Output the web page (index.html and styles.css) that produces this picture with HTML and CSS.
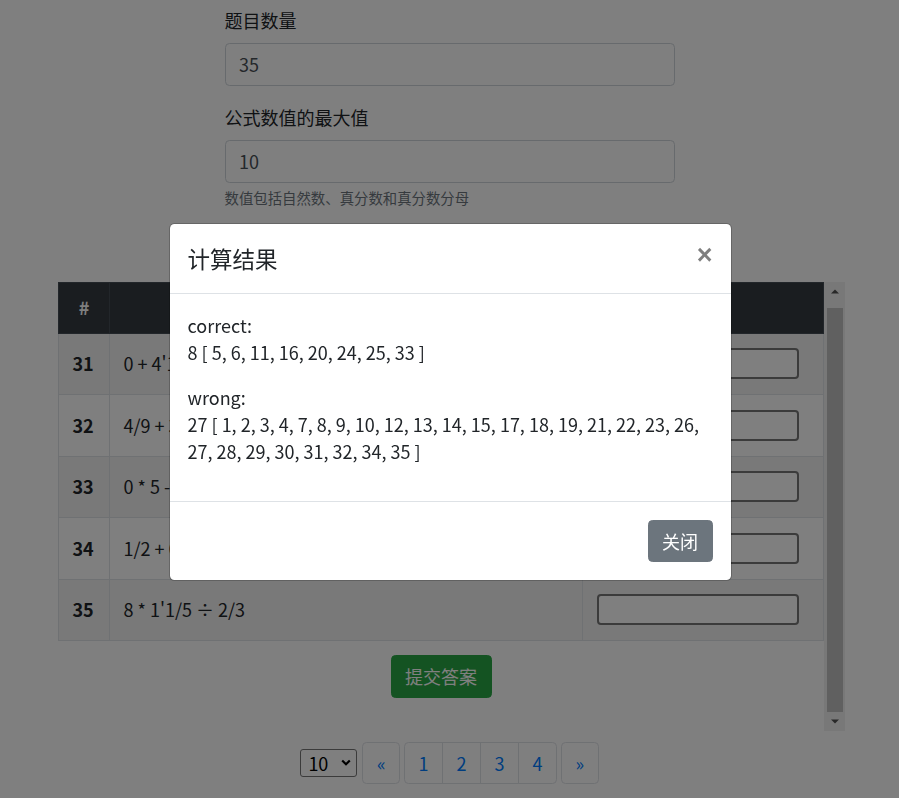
FILE: index.html
```html
<!DOCTYPE html>
<html lang="zh-CN">
<head>
<meta charset="utf-8">
<title>四则运算</title>
<link rel="stylesheet" href="styles.css">
</head>
<body>
<div class="page">
  <form class="setup">
    <div class="group">
      <label class="lbl">题目数量</label>
      <input class="field" type="text" value="35">
    </div>
    <div class="group">
      <label class="lbl">公式数值的最大值</label>
      <input class="field" type="text" value="10">
      <small class="hint">数值包括自然数、真分数和真分数分母</small>
    </div>
  </form>

  <div class="scroll-area">
    <div class="scroll-content">
      <table class="qtable">
        <colgroup>
          <col class="c-num">
          <col>
          <col class="c-ans">
        </colgroup>
        <thead>
          <tr><th>#</th><th>题目</th><th>答案</th></tr>
        </thead>
        <tbody>
          <tr><th>31</th><td>0 + 4'1/3 - 2/7</td><td><input class="ans" type="text"></td></tr>
          <tr><th>32</th><td>4/9 + 3 * 1/2</td><td><input class="ans" type="text"></td></tr>
          <tr><th>33</th><td>0 * 5 - 1/4</td><td><input class="ans" type="text"></td></tr>
          <tr><th>34</th><td>1/2 + 6 ÷ 3</td><td><input class="ans" type="text"></td></tr>
          <tr><th>35</th><td>8 * 1'1/5 ÷ 2/3</td><td><input class="ans" type="text"></td></tr>
        </tbody>
      </table>
      <div class="submit-row"><button type="button" class="btn btn-success">提交答案</button></div>
    </div>
    <div class="vbar">
      <div class="vbar-btn">
        <svg width="8" height="5" viewBox="0 0 8 5"><polygon points="4,0.5 8,4.5 0,4.5" fill="#505050"/></svg>
      </div>
      <div class="vbar-track"><div class="vbar-thumb"></div></div>
      <div class="vbar-btn">
        <svg width="8" height="5" viewBox="0 0 8 5"><polygon points="0,0.5 8,0.5 4,4.5" fill="#505050"/></svg>
      </div>
    </div>
  </div>

  <nav class="pager">
    <div class="select-wrap">
      <select class="size-select"><option>10</option><option>20</option></select>
      <svg class="chev" width="10" height="7" viewBox="0 0 10 7"><polyline points="1.2,1.5 5,5.2 8.8,1.5" fill="none" stroke="#000" stroke-width="2.2"/></svg>
    </div>
    <ul class="pagination"><li><a class="page-link" href="#">«</a></li></ul>
    <ul class="pagination">
      <li><a class="page-link" href="#">1</a></li>
      <li><a class="page-link" href="#">2</a></li>
      <li><a class="page-link" href="#">3</a></li>
      <li><a class="page-link" href="#">4</a></li>
    </ul>
    <ul class="pagination"><li><a class="page-link" href="#">»</a></li></ul>
  </nav>
</div>

<div class="backdrop"></div>
<div class="modal">
  <div class="dialog">
    <div class="m-header">
      <h5 class="m-title">计算结果</h5>
      <button type="button" class="close">×</button>
    </div>
    <div class="m-body">
      <p>correct:<br>8 [ 5, 6, 11, 16, 20, 24, 25, 33 ]</p>
      <p>wrong:<br>27 [ 1, 2, 3, 4, 7, 8, 9, 10, 12, 13, 14, 15, 17, 18, 19, 21, 22, 23, 26, 27, 28, 29, 30, 31, 32, 34, 35 ]</p>
    </div>
    <div class="m-footer">
      <button type="button" class="btn btn-secondary">关闭</button>
    </div>
  </div>
</div>
</body>
</html>
```
FILE: styles.css
```css
html, body {
  margin: 0;
  padding: 0;
}
body {
  font-family: "Noto Sans CJK SC", sans-serif;
  font-size: 18px;
  line-height: 27px;
  color: #212529;
  background: #fff;
}

/* form */
.setup {
  width: 450px;
  margin: 0 auto;
  padding-top: 7px;
}
.group {
  margin-bottom: 18px;
}
.lbl {
  display: block;
  margin-bottom: 9px;
}
.field {
  display: block;
  width: 100%;
  height: 42.75px;
  box-sizing: border-box;
  padding: 6.75px 13.5px;
  font-family: inherit;
  font-size: 18px;
  line-height: 27px;
  color: #495057;
  background: #fff;
  border: 1px solid #ced4da;
  border-radius: 4.5px;
}
.hint {
  display: block;
  margin-top: 4.5px;
  font-size: 14.4px;
  line-height: 21.6px;
  color: #6c757d;
}

/* buttons */
.btn {
  font-family: inherit;
  font-size: 18px;
  line-height: 27px;
  padding: 6.75px 13.5px;
  border: 1px solid transparent;
  border-radius: 4.5px;
  color: #fff;
  cursor: pointer;
}
.btn-success { background: #28a745; border-color: #28a745; }
.btn-secondary { background: #6c757d; border-color: #6c757d; }

/* scroll area with its bar */
.scroll-area {
  display: flex;
  height: 449px;
  margin: 73px 54px 0 58px;
}
.scroll-content {
  flex: 1;
  min-width: 0;
  overflow: hidden;
}
.vbar {
  width: 21px;
  flex: none;
  display: flex;
  flex-direction: column;
  background: #f1f1f1;
}
.vbar-btn {
  height: 19px;
  flex: none;
  display: flex;
  align-items: center;
  justify-content: center;
}
.vbar-btn svg {
  display: block;
  margin-left: 1px;
}
.vbar-track {
  flex: 1;
  display: flex;
  flex-direction: column;
  padding: 7px 2px 0 3px;
}
.vbar-thumb {
  flex: 1;
  background: #c1c1c1;
}

/* table */
.qtable {
  width: 100%;
  border-collapse: collapse;
  margin-bottom: 14px;
}
.c-num { width: 51px; }
.c-ans { width: 241px; }
.qtable th,
.qtable td {
  border: 1px solid #dee2e6;
  padding: 0 13.5px;
  vertical-align: middle;
  text-align: left;
}
.qtable thead th {
  height: 50px;
  background: #343a40;
  border-color: #454d55;
  color: #fff;
  font-weight: 700;
  text-align: center;
}
.qtable tbody tr {
  height: 61.5px;
}
.qtable tbody th {
  font-weight: 700;
}
.qtable tbody tr:nth-child(odd) {
  background: rgba(0, 0, 0, 0.05);
}
.ans {
  display: block;
  width: 202px;
  height: 31px;
  box-sizing: border-box;
  border: 2px solid #767676;
  border-radius: 4px;
  background: #fff;
  font-family: inherit;
  font-size: 16px;
}
.submit-row {
  text-align: center;
}

/* pager */
.pager {
  display: flex;
  justify-content: center;
  align-items: center;
  gap: 4px;
  margin-top: 11px;
}
.select-wrap {
  display: flex;
  align-items: center;
  width: 57px;
  height: 28px;
  box-sizing: border-box;
  padding: 0 5px 0 7px;
  margin-right: 1px;
  background: #fff;
  border: 1px solid #767676;
  border-radius: 3px;
}
.size-select {
  flex: 1;
  min-width: 0;
  appearance: none;
  -webkit-appearance: none;
  border: 0;
  padding: 0;
  background: transparent;
  font-family: inherit;
  font-size: 18px;
  line-height: 24px;
  color: #000;
  outline: none;
}
.chev {
  display: block;
  flex: none;
}
.pagination {
  display: flex;
  list-style: none;
  margin: 0;
  padding: 0;
}
.page-link {
  display: block;
  padding: 9px 13.5px;
  margin-left: -1px;
  font-size: 18px;
  line-height: 22.5px;
  color: #007bff;
  text-decoration: none;
  background: #fff;
  border: 1px solid #dee2e6;
}
.pagination li:first-child .page-link {
  margin-left: 0;
  border-top-left-radius: 4.5px;
  border-bottom-left-radius: 4.5px;
}
.pagination li:last-child .page-link {
  border-top-right-radius: 4.5px;
  border-bottom-right-radius: 4.5px;
}

/* modal */
.backdrop {
  position: fixed;
  inset: 0;
  background: rgba(0, 0, 0, 0.5);
}
.modal {
  position: fixed;
  inset: 0;
  display: flex;
  justify-content: center;
  align-items: flex-start;
  padding: 223px 0 0 1px;
  box-sizing: border-box;
}
.dialog {
  width: 561px;
  background: #fff;
  background-clip: padding-box;
  border: 1px solid rgba(0, 0, 0, 0.2);
  border-radius: 5.4px;
}
.m-header {
  display: flex;
  align-items: flex-start;
  justify-content: space-between;
  padding: 17.5px 18px;
  border-bottom: 1px solid #dee2e6;
}
.m-title {
  margin: 0;
  font-size: 22.5px;
  line-height: 33.75px;
  font-weight: 400;
}
.close {
  padding: 18px;
  margin: -18px -18px -18px auto;
  background: transparent;
  border: 0;
  font-family: "Liberation Sans", sans-serif;
  font-size: 27px;
  font-weight: 700;
  line-height: 1;
  color: #000;
  opacity: 0.5;
  text-shadow: 0 1px 0 #fff;
  cursor: pointer;
}
.m-body {
  padding: 18px;
}
.m-body p {
  margin: 0 0 18px;
}
.m-footer {
  display: flex;
  justify-content: flex-end;
  align-items: center;
  padding: 13.5px;
  border-top: 1px solid #dee2e6;
}
.m-footer .btn {
  margin: 4.5px;
}
```
